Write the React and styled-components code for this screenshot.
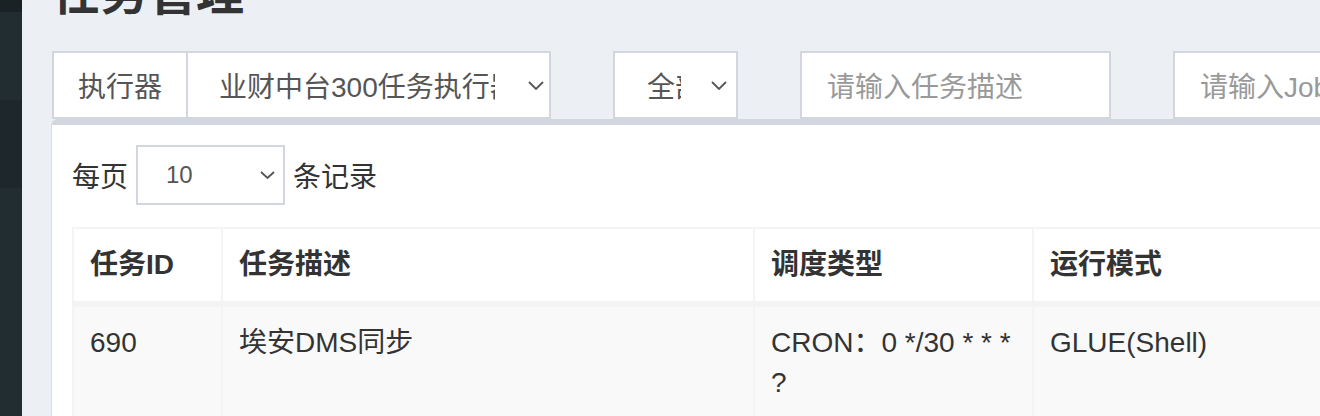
import React from 'react';
import styled, { createGlobalStyle } from 'styled-components';

const Global = createGlobalStyle`
  html, body { margin: 0; padding: 0; overflow: hidden; background: #ecf0f5; }
  body { font-family: "Liberation Sans", "Noto Sans CJK SC", sans-serif; color: #333; }
  * { box-sizing: border-box; }
`;

const Page = styled.div`
  display: flex;
  width: 1320px;
  height: 416px;
  overflow: hidden;
`;

const Sidebar = styled.aside`
  flex: 0 0 22px;
  display: flex;
  flex-direction: column;
  background: #222d32;
`;

const SideBand = styled.div`
  height: ${p => p.$h}px;
  flex: ${p => (p.$grow ? 1 : '0 0 auto')};
  background: ${p => p.$c};
`;

const Content = styled.main`
  flex: 0 0 auto;
  width: 1500px;
  background: #ecf0f5;
  padding: 0 30px;
`;

const Title = styled.h1`
  margin: -32px 0 0;
  font-size: 48px;
  line-height: 52px;
  font-weight: 700;
  color: #333;
`;

const FilterRow = styled.div`
  display: flex;
  gap: 62px;
  margin-top: 31px;
  height: 68px;
`;

const InputGroup = styled.div`
  display: flex;
  width: ${p => p.$w}px;
  height: 68px;
`;

const Addon = styled.div`
  flex: 0 0 134px;
  display: flex;
  align-items: center;
  justify-content: center;
  border: 2px solid #d2d6de;
  border-right: 0;
  background: #fff;
  color: #555;
  font-size: 28px;
`;

const SelectBox = styled.div`
  flex: ${p => (p.$w ? `0 0 ${p.$w}px` : 1)};
  display: flex;
  align-items: center;
  height: ${p => p.$h || 68}px;
  padding: 0 ${p => p.$pr}px 0 ${p => p.$pl}px;
  border: 2px solid #d2d6de;
  background: #fff;
  color: #555;
  font-size: ${p => p.$fs || 28}px;
`;

const SelectText = styled.span`
  width: ${p => p.$w}px;
  overflow: hidden;
  white-space: nowrap;
`;

const ChevronSvg = styled.svg`
  margin-left: auto;
  flex: 0 0 auto;
`;

const Chevron = ({ w = 16, h = 9 }) => (
  <ChevronSvg width={w} height={h} viewBox={`0 0 ${w} ${h}`}>
    <polyline
      points={`1,1 ${w / 2},${h - 1} ${w - 1},1`}
      fill="none"
      stroke="#555"
      strokeWidth="1.8"
    />
  </ChevronSvg>
);

const TextInput = styled.div`
  width: ${p => p.$w}px;
  height: 68px;
  display: flex;
  align-items: center;
  padding-left: 25px;
  border: 2px solid #d2d6de;
  background: #fff;
  color: #999;
  font-size: 28px;
  white-space: nowrap;
  overflow: hidden;
`;

const Box = styled.section`
  width: 1440px;
  background: #fff;
  border-top: 6px solid #d2d6de;
  border-radius: 6px 6px 0 0;
  box-shadow: 0 2px 2px rgba(0, 0, 0, 0.1), -1px 0 0 rgba(0, 0, 0, 0.05);
  padding: 20px;
  height: 400px;
`;

const LengthRow = styled.div`
  display: flex;
  align-items: center;
  gap: 8px;
  height: 60px;
  font-size: 28px;
  color: #333;
`;

const Table = styled.table`
  margin-top: 22px;
  table-layout: fixed;
  border-collapse: separate;
  border-spacing: 0;
  border-left: 2px solid #f4f4f4;
  border-top: 2px solid #f4f4f4;
  width: 1400px;
  font-size: 28px;
  color: #333;
`;

const Col = styled.col`
  width: ${p => p.$w}px;
`;

const Th = styled.th`
  text-align: left;
  font-weight: 700;
  padding: 16px;
  line-height: 40px;
  background: #fff;
  border-right: 2px solid #f4f4f4;
  border-bottom: 6px solid #f4f4f4;
`;

const Td = styled.td`
  vertical-align: top;
  padding: 16px;
  line-height: 40px;
  background: #f9f9f9;
  border-right: 2px solid #f4f4f4;
  border-bottom: 2px solid #f4f4f4;
`;

const columns = [
  { w: 149, title: '任务ID' },
  { w: 532, title: '任务描述' },
  { w: 279, title: '调度类型' },
  { w: 300, title: '运行模式' },
  { w: 140, title: '状态' },
];

const row = ['690', '埃安DMS同步', 'CRON：0 */30 * * * ?', 'GLUE(Shell)', '运行'];

export default function App() {
  return (
    <>
      <Global />
      <Page>
        <Sidebar>
          <SideBand $h={12} $c="#1a2226" />
          <SideBand $h={88} $c="#222d32" />
          <SideBand $h={88} $c="#1e282c" />
          <SideBand $grow $c="#222d32" />
        </Sidebar>
        <Content>
          <Title>任务管理</Title>
          <FilterRow>
            <InputGroup $w={499}>
              <Addon>执行器</Addon>
              <SelectBox $pl={31} $pr={5}>
                <SelectText $w={276}>业财中台300任务执行器</SelectText>
                <Chevron />
              </SelectBox>
            </InputGroup>
            <SelectBox $w={125} $pl={32} $pr={9}>
              <SelectText $w={34}>全部</SelectText>
              <Chevron />
            </SelectBox>
            <TextInput $w={311}>请输入任务描述</TextInput>
            <TextInput $w={312}>请输入JobHandler</TextInput>
          </FilterRow>
          <Box>
            <LengthRow>
              每页
              <SelectBox $w={149} $h={60} $pl={28} $pr={8} $fs={24}>
                <SelectText $w={40}>10</SelectText>
                <Chevron w={15} h={8} />
              </SelectBox>
              条记录
            </LengthRow>
            <Table>
              <colgroup>
                {columns.map(c => (
                  <Col key={c.title} $w={c.w} />
                ))}
              </colgroup>
              <thead>
                <tr>
                  {columns.map(c => (
                    <Th key={c.title}>{c.title}</Th>
                  ))}
                </tr>
              </thead>
              <tbody>
                <tr>
                  {row.map((v, i) => (
                    <Td key={i}>{v}</Td>
                  ))}
                </tr>
              </tbody>
            </Table>
          </Box>
        </Content>
      </Page>
    </>
  );
}
